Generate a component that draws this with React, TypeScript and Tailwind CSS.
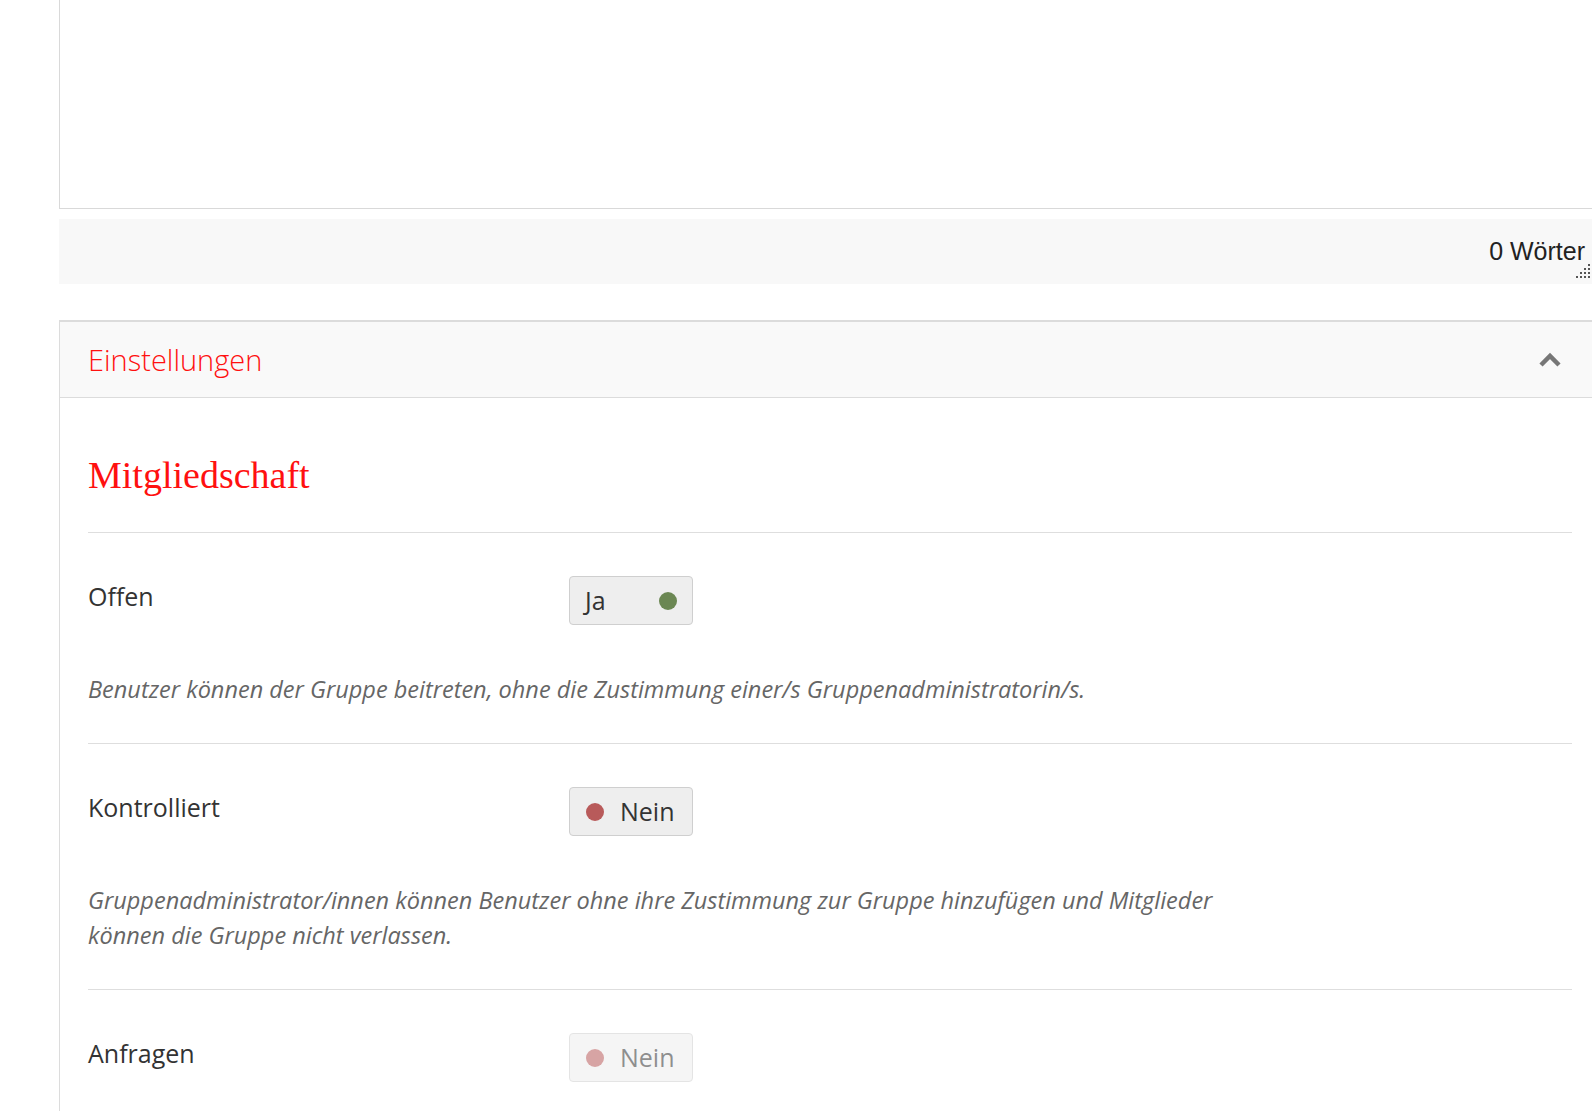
const sans = { fontFamily: '"Open Sans", "Liberation Sans", sans-serif' };

type Row = {
  label: string;
  on: boolean;
  disabled?: boolean;
  text?: string;
};

const rows: Row[] = [
  {
    label: "Offen",
    on: true,
    text: "Benutzer können der Gruppe beitreten, ohne die Zustimmung einer/s Gruppenadministratorin/s.",
  },
  {
    label: "Kontrolliert",
    on: false,
    text: "Gruppenadministrator/innen können Benutzer ohne ihre Zustimmung zur Gruppe hinzufügen und Mitglieder können die Gruppe nicht verlassen.",
  },
  { label: "Anfragen", on: false, disabled: true },
];

const Toggle = ({ on, disabled }: { on: boolean; disabled?: boolean }) => (
  <button
    className={
      "flex h-[49px] w-[124px] items-center rounded-[4px] border border-[#cfcfcf] bg-[#eeeeee] text-[25px] text-[#333] " +
      (disabled ? "opacity-55" : "")
    }
    style={sans}
  >
    {on ? (
      <>
        <span className="pl-[15px] leading-[47px]">Ja</span>
        <span className="ml-auto mr-[15px] h-[18px] w-[18px] rounded-full bg-[#6b8753]" />
      </>
    ) : (
      <>
        <span className="ml-[16px] h-[18px] w-[18px] rounded-full bg-[#b85a5a]" />
        <span className="ml-[16px] leading-[47px]">Nein</span>
      </>
    )}
  </button>
);

const Grip = () => (
  <svg width="14" height="14" viewBox="0 0 14 14" className="absolute bottom-[6px] right-[10px]">
    {[
      [12, 0],
      [12, 4],
      [8, 4],
      [12, 8],
      [8, 8],
      [4, 8],
      [12, 12],
      [8, 12],
      [4, 12],
      [0, 12],
    ].map(([x, y], i) => (
      <rect key={i} x={x} y={y} width="2" height="2" fill="#555" />
    ))}
  </svg>
);

export default function App() {
  return (
    <div className="w-[1592px] h-[1111px] overflow-hidden bg-white">
      <div className="ml-[59px] w-[1541px]">
        {/* editor */}
        <div className="h-[209px] border-x border-b border-[#d9d9d9] bg-white" />

        {/* status bar */}
        <div className="relative mt-[10px] flex h-[65px] items-center justify-end bg-[#f8f8f8] pr-[15px]">
          <span
            className="text-[25px] text-[#222] pt-[1px]"
            style={{ fontFamily: '"Liberation Sans", Arial, sans-serif' }}
          >
            0 Wörter
          </span>
          <Grip />
        </div>

        {/* panel */}
        <div className="mt-[36px] border-l border-t-2 border-[#dcdcdc]">
          <div className="flex h-[76px] items-center justify-between border-b border-[#dcdcdc] bg-[#f9f9f9] pl-[28px] pr-[38px]">
            <span className="text-[29px] font-light text-[#ff1010] pt-[1px]" style={sans}>
              Einstellungen
            </span>
            <svg width="24" height="16" viewBox="0 0 24 16">
              <polyline
                points="3,13 12,4 21,13"
                fill="none"
                stroke="#777"
                strokeWidth="4.5"
                strokeLinecap="butt"
              />
            </svg>
          </div>

          <div className="px-[28px]">
            <h2
              className="pt-[55px] pb-[35px] text-[38px] leading-[44px] text-[#ff1010]"
              style={{ fontFamily: '"Liberation Serif", "DejaVu Serif", serif' }}
            >
              Mitgliedschaft
            </h2>

            {rows.map((r) => (
              <div key={r.label} className="border-t border-[#dedede] pt-[43px] pb-[36px]">
                <div className="flex items-start">
                  <div className="w-[481px] text-[25px] leading-[40px] text-[#333]" style={sans}>
                    {r.label}
                  </div>
                  <Toggle on={r.on} disabled={r.disabled} />
                </div>
                {r.text && (
                  <p
                    className="mt-[47px] max-w-[1190px] text-[23.5px] italic leading-[35px] text-[#666]"
                    style={sans}
                  >
                    {r.text}
                  </p>
                )}
              </div>
            ))}
          </div>
        </div>
      </div>
    </div>
  );
}
